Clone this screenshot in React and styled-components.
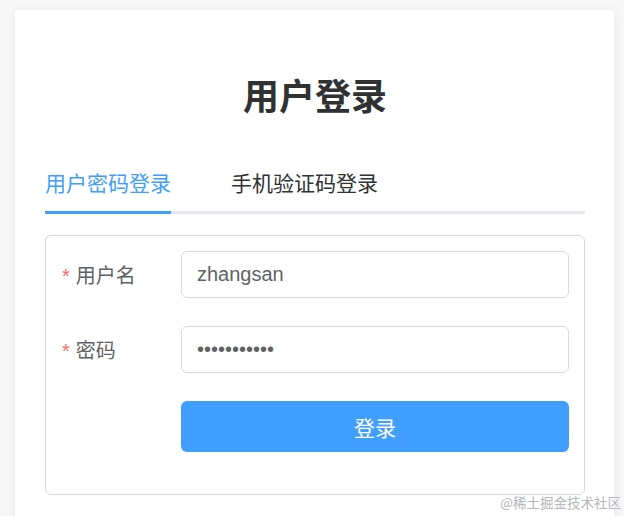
import styled, { createGlobalStyle } from "styled-components";

const GlobalStyle = createGlobalStyle`
  html, body {
    margin: 0;
    padding: 0;
    background: #f7f7f7;
    font-family: "Liberation Sans", "Noto Sans CJK SC", sans-serif;
  }
  #root {
    height: 516px;
    overflow: hidden;
    position: relative;
  }
`;

const Page = styled.div`
  padding: 10px 10px 0 15px;
`;

const Card = styled.div`
  background: #fff;
  width: 599px;
  box-sizing: border-box;
  padding: 70px 29px 40px 30px;
  border-radius: 4px;
  box-shadow: 0 2px 12px rgba(0, 0, 0, 0.08);
`;

const Title = styled.h1`
  margin: 0;
  text-align: center;
  font-size: 36px;
  line-height: 36px;
  font-weight: 700;
  color: #303133;
`;

const TabNav = styled.div`
  display: flex;
  margin-top: 56px;
  border-bottom: 3px solid #e4e7ed;
`;

const Tab = styled.div`
  font-size: 21px;
  line-height: 24px;
  padding-bottom: 15px;
  margin-right: 60px;
  margin-bottom: -3px;
  color: ${(p) => (p.$active ? "#409eff" : "#303133")};
  border-bottom: 3px solid ${(p) => (p.$active ? "#409eff" : "transparent")};
`;

const FormBox = styled.div`
  margin-top: 21px;
  border: 1px solid #d6d8dc;
  border-radius: 6px;
  padding: 15px 15px 42px 15px;
  display: flex;
  flex-direction: column;
  gap: 28px;
`;

const Row = styled.div`
  display: grid;
  grid-template-columns: 120px 1fr;
  align-items: center;
`;

const Label = styled.label`
  font-size: 20px;
  color: #606266;
  padding-left: 1px;
  &::before {
    content: "*";
    color: #f56c6c;
    margin-right: 6px;
    font-size: 20px;
  }
`;

const Input = styled.input`
  height: 47px;
  box-sizing: border-box;
  border: 1px solid #d8dadf;
  border-radius: 6px;
  padding: 0 15px;
  font-size: 20px;
  color: #606266;
  font-family: "Liberation Sans", "Noto Sans CJK SC", sans-serif;
  outline: none;
  width: 100%;
`;

const Button = styled.button`
  grid-column: 2;
  height: 51px;
  border: none;
  border-radius: 6px;
  background: #409eff;
  color: #fff;
  font-size: 21px;
  font-family: "Liberation Sans", "Noto Sans CJK SC", sans-serif;
  cursor: pointer;
`;

const Watermark = styled.div`
  position: absolute;
  right: 3px;
  bottom: 4px;
  font-size: 13.5px;
  color: #b4b7bc;
  font-family: "Noto Sans CJK SC", sans-serif;
`;

export default function App() {
  return (
    <>
      <GlobalStyle />
      <Page>
        <Card>
          <Title>用户登录</Title>
          <TabNav>
            <Tab $active>用户密码登录</Tab>
            <Tab>手机验证码登录</Tab>
          </TabNav>
          <FormBox>
            <Row>
              <Label>用户名</Label>
              <Input readOnly defaultValue="zhangsan" />
            </Row>
            <Row>
              <Label>密码</Label>
              <Input type="password" readOnly defaultValue="12345678901" />
            </Row>
            <Row>
              <Button>登录</Button>
            </Row>
          </FormBox>
        </Card>
      </Page>
      <Watermark>@稀土掘金技术社区</Watermark>
    </>
  );
}
